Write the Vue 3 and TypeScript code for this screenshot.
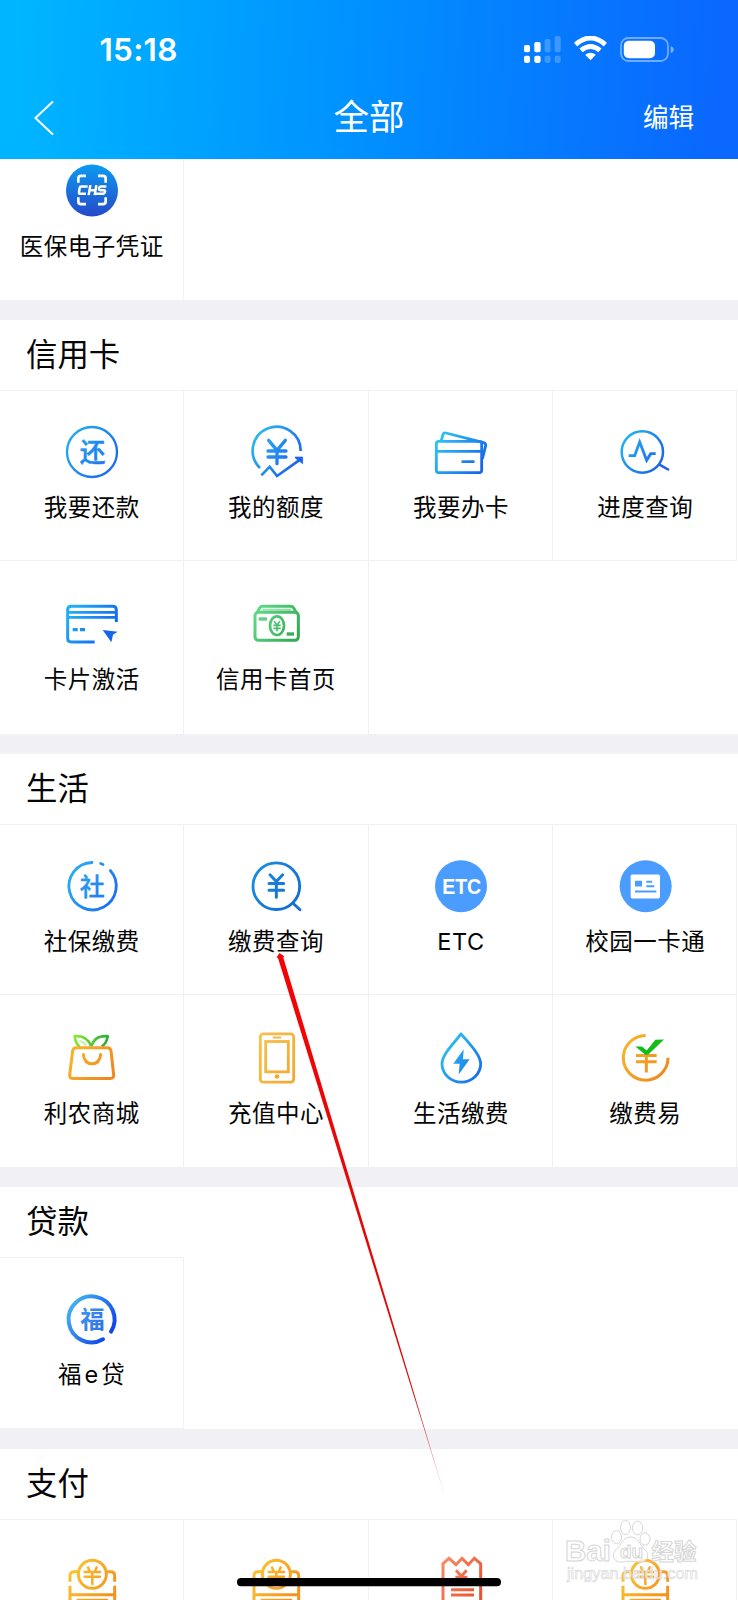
<script setup lang="ts">
interface Icon {
  x: number
  y: number
  from: string
  to: string
  body: string
}
interface Item {
  label: string
  icon: string
}
interface Section {
  title?: string
  rows: { kind: string; items: Item[] }[]
}

const CJK = "font-family=\"'Noto Sans CJK SC', sans-serif\" text-anchor=\"middle\""
const LATIN = "font-family=\"'Liberation Sans', Arial, sans-serif\" text-anchor=\"middle\""

// Every icon uses a 180-unit square; x and y are the origin of that square.
const icons: Record<string, Icon> = {
  chs: {
    x: 186, y: 482.5, from: '#0e8fee', to: '#2151cf',
    body: `<linearGradient id="chsBg" x1="0" y1="0" x2="0" y2="1"><stop offset="0" stop-color="#0c9bf2"/><stop offset="1" stop-color="#2549c8"/></linearGradient>
      <circle cx="276" cy="571" r="78" fill="url(#chsBg)"/>
      <path d="M235 548v-13q0-8 8-8h15M294 527h15q8 0 8 8v13M317 591v13q0 8-8 8h-15M258 612h-15q-8 0-8-8v-13" fill="none" stroke="#fff" stroke-width="8"/>
      <g fill="none" stroke="#fff" stroke-width="7.5"><path d="M263 559h-19q-4 0-5 4l-2 13q-1 5 4 5h17M271 555l-5 30M289 555l-5 30M268 570h19"/><path d="M319 559h-17q-4 0-5 5t4 6h11q4 0 3 5t-5 6h-22"/></g>`,
  },
  repay: {
    x: 186, y: 66, from: '#20a8ee', to: '#1f6cf0',
    body: `<circle cx="276" cy="156" r="75" fill="none" stroke="url(#G)" stroke-width="7"/>
      <text x="278" y="185" ${CJK} font-size="77" font-weight="500" fill="url(#G)" stroke="url(#G)" stroke-width="1.5">还</text>`,
  },
  quota: {
    x: 739, y: 66, from: '#2bb4ee', to: '#1b63ef',
    body: `<g fill="none" stroke="url(#G)" stroke-width="8">
      <path d="M781 204A72 72 0 1 1 903 153"/><path d="M785 226l25-26 22 28 66-47"/>
      <path d="M807 121l25 30 25-30M832 150v41M805 153h54M805 171h54" stroke-width="10" stroke-linecap="round"/></g>
      <path d="M886 171h23v20l-21-16z" fill="#1b63ef" stroke="#1b63ef" stroke-width="2"/>`,
  },
  apply: {
    x: 183, y: 66, from: '#2cc0f2', to: '#1769ea',
    body: `<g fill="none" stroke="url(#G)" stroke-width="8.5" stroke-linejoin="round">
      <rect x="199" y="124" width="136" height="94" rx="7"/><path d="M199 154h136"/>
      <path d="M214 121l5-18q2-6 9-4l113 29q7 2 6 9l-10 40"/><path d="M278 185h32" stroke-linecap="round"/></g>`,
  },
  progress: {
    x: 736, y: 66, from: '#22aff0', to: '#1c5fe8',
    body: `<g fill="none" stroke="url(#G)" stroke-width="7.5"><circle cx="818" cy="156" r="62"/>
      <path d="M868 193l30 17"/><path d="M777 167h18l15-41 21 55 12-20h15" stroke-width="8.5"/></g>`,
  },
  activate: {
    x: 186, y: 42, from: '#20aef3', to: '#1460ee',
    body: `<g fill="none" stroke="url(#G)" stroke-width="9"><path d="M284 186h-70q-11 0-11-11V90q0-11 11-11h124q11 0 11 11v36"/>
      <path d="M204 97h145M204 112h145" stroke-width="8"/><path d="M218 149h15M240 149h15" stroke-width="10"/></g>
      <path d="M308 150l45 5-14 9-5 23z" fill="#1464ee"/>`,
  },
  cash: {
    x: 739, y: 42, from: '#5fd888', to: '#33a952',
    body: `<g fill="none" stroke="url(#G)" stroke-width="9"><path d="M772 98l8-14q3-5 9-5h84q6 0 9 5l8 14"/>
      <path d="M788 89h86" stroke-width="6" opacity=".6"/>
      <rect x="766" y="97" width="130" height="84" rx="10"/><ellipse cx="832" cy="137" rx="21" ry="28" fill="#fff" stroke-width="8"/>
      <path d="M823 124l9 11 9-11M832 134v20M821 136h22M821 145h22" stroke-width="5"/></g>
      <path d="M777 112h25v10h-25z" fill="#65cd83"/><path d="M861 157h22v10h-22z" fill="#3cac5a"/>`,
  },
  social: {
    x: 186, y: 46.5, from: '#2aabef', to: '#1d72f2',
    body: `<g fill="none" stroke="url(#G)" stroke-width="8.5" stroke-linecap="round">
      <path d="M276 66A71 71 0 1 0 331 90"/><path d="M302 69l7 3"/></g>
      <text x="277" y="167" ${CJK} font-size="75" font-weight="500" fill="url(#G)" stroke="url(#G)" stroke-width="1">社</text>`,
  },
  feeQuery: {
    x: 739, y: 46.5, from: '#1b8ae0', to: '#126ed2',
    body: `<g fill="none" stroke="url(#G)" stroke-width="8.5" stroke-linecap="round"><circle cx="830" cy="137" r="70"/>
      <path d="M880 188l21 20"/><path d="M811 103l19 20 19-20M830 124v46M808 129h44M808 149h44" stroke-width="9"/></g>`,
  },
  etc: {
    x: 183, y: 46.5, from: '#4a9dff', to: '#4a9dff',
    body: `<circle cx="273" cy="137" r="78" fill="#4a9dff"/>
      <text x="275" y="161" ${LATIN} font-size="66" font-weight="700" fill="#fff" textLength="117" lengthAdjust="spacingAndGlyphs">ETC</text>`,
  },
  campus: {
    x: 736, y: 46.5, from: '#4a9dff', to: '#4a9dff',
    body: `<circle cx="828" cy="137" r="78" fill="#4a9dff"/><rect x="783" y="102" width="88" height="72" rx="5" fill="#fff"/>
      <path d="M796 121h21v17h-21zM830 121h17v6h-17zM830 134h24v6h-24zM796 150h64v6h-64z" fill="#4a9dff"/>`,
  },
  farm: {
    x: 186, y: 52.5, from: '#f7b82b', to: '#f18720',
    body: `<linearGradient id="leaf" x1="220" y1="80" x2="326" y2="100" gradientUnits="userSpaceOnUse"><stop offset="0" stop-color="#8dec35"/><stop offset="1" stop-color="#28a838"/></linearGradient>
      <g fill="none" stroke="url(#leaf)" stroke-width="8" stroke-linejoin="round"><path d="M239 108q-13-9-15-31 38-3 49 30"/><path d="M274 108q9-34 49-31-3 22-18 31"/><path d="M238 91q15 4 20 15" stroke-width="6" opacity=".4"/></g>
      <path d="M228 112h94q9 0 11 9l8 72q1 11-10 11H220q-12 0-11-11l9-72q2-9 10-9zM250 132q3 27 26 28 23-1 26-28" fill="none" stroke="url(#G)" stroke-width="9" stroke-linecap="round"/>`,
  },
  recharge: {
    x: 739, y: 52.5, from: '#f7c04c', to: '#f1aa31',
    body: `<g fill="none" stroke="url(#G)" stroke-width="8.5"><rect x="782" y="70" width="100" height="145" rx="9"/><rect x="798" y="93" width="68" height="91"/>
      <path d="M819 81h25" stroke-width="6"/></g><circle cx="832" cy="198" r="7" fill="#f2a832"/>`,
  },
  utility: {
    x: 183, y: 52.5, from: '#32c4ed', to: '#1570ef',
    body: `<path d="M273 70C253 97 216 132 216 160a58 55 0 0 0 116 0C332 132 295 97 273 70z" fill="none" stroke="url(#G)" stroke-width="8.5" stroke-linejoin="round"/>
      <path d="M281 116l-31 44h19l-3 32 33-46h-20z" fill="url(#G)"/>`,
  },
  easyPay: {
    x: 736, y: 52.5, from: '#f4b42b', to: '#f18b1d',
    body: `<g fill="none" stroke="url(#G)" stroke-width="9"><path d="M828 75A67 67 0 1 0 895 142"/>
      <path d="M830 130v56M799 135h62M799 154h62"/></g>
      <path d="M797 108h20l14 12 26-32 26-1-48 46h-8z" fill="#13bd18"/>`,
  },
  fortune: {
    x: 186, y: 328, from: '#40aef0', to: '#0f43ea',
    body: `<path d="M333 456A69 69 0 1 0 309 479" fill="none" stroke="url(#G)" stroke-width="12" stroke-linecap="round"/>
      <linearGradient id="fu" x1="0" y1="0" x2="1" y2="1"><stop offset="0" stop-color="#3f9cf0"/><stop offset="1" stop-color="#2d6de8"/></linearGradient>
      <text x="277" y="446" ${CJK} font-size="73" font-weight="700" fill="url(#fu)">福</text>`,
  },
  coin: {
    x: 186, y: 363, from: '#fbc234', to: '#f3921c',
    body: `<g fill="none" stroke="url(#G)" stroke-width="9"><circle cx="277" cy="433" r="42"/>
      <path d="M210 455v-18q0-12 12-12h12M320 425h12q12 0 12 12v18M210 467v55h134v-55M210 494h134M230 511h94"/>
      <path d="M264 412l5 12M290 412l-5 12M254 426h46M254 440h46M277 426v36" stroke-linecap="round" stroke-width="7.5"/></g>`,
  },
  bill: {
    x: 183, y: 363, from: '#f58a62', to: '#e9502f',
    body: `<g fill="none" stroke="url(#G)" stroke-width="9"><path d="M219 530V401l18-16 21 19 18-19 19 19 18-19 19 16v129"/>
      <path d="M258 421l16 18 16-18M274 440v20M256 442h36"/><path d="M243 479h69M243 495h69"/></g>`,
  },
}

const sections: Section[] = [
  { rows: [{ kind: 'partial', items: [{ label: '医保电子凭证', icon: 'chs' }] }] },
  {
    title: '信用卡',
    rows: [
      {
        kind: 'first',
        items: [
          { label: '我要还款', icon: 'repay' },
          { label: '我的额度', icon: 'quota' },
          { label: '我要办卡', icon: 'apply' },
          { label: '进度查询', icon: 'progress' },
        ],
      },
      {
        kind: 'second tall',
        items: [
          { label: '卡片激活', icon: 'activate' },
          { label: '信用卡首页', icon: 'cash' },
        ],
      },
    ],
  },
  {
    title: '生活',
    rows: [
      {
        kind: 'first',
        items: [
          { label: '社保缴费', icon: 'social' },
          { label: '缴费查询', icon: 'feeQuery' },
          { label: 'ETC', icon: 'etc' },
          { label: '校园一卡通', icon: 'campus' },
        ],
      },
      {
        kind: 'second',
        items: [
          { label: '利农商城', icon: 'farm' },
          { label: '充值中心', icon: 'recharge' },
          { label: '生活缴费', icon: 'utility' },
          { label: '缴费易', icon: 'easyPay' },
        ],
      },
    ],
  },
  { title: '贷款', rows: [{ kind: 'first single', items: [{ label: '福 e 贷', icon: 'fortune' }] }] },
  {
    title: '支付',
    rows: [
      {
        kind: 'first',
        items: [
          { label: '', icon: 'coin' },
          { label: '', icon: 'coin' },
          { label: '', icon: 'bill' },
          { label: '', icon: 'coin' },
        ],
      },
    ],
  },
]

function viewBox(name: string): string {
  const i = icons[name]
  return `${i.x} ${i.y} 180 180`
}

function artwork(name: string): string {
  const i = icons[name]
  const id = `grad-${name}`
  const gradient = `<linearGradient id="${id}" gradientUnits="userSpaceOnUse" x1="${i.x + 30}" y1="${i.y + 50}" x2="${i.x + 150}" y2="${i.y + 130}"><stop offset="0" stop-color="${i.from}"/><stop offset="1" stop-color="${i.to}"/></linearGradient>`
  return gradient + i.body.split('url(#G)').join(`url(#${id})`)
}
</script>

<template>
  <div class="screen">
    <header class="header">
      <div class="status">
        <span class="time">15:18</span>
        <div class="indicators">
          <svg class="signal" viewBox="0 0 37 27">
            <g fill="#fff">
              <rect x="0" y="9" width="6" height="7.3" rx="1.8" />
              <rect x="10.3" y="6" width="6.3" height="10.3" rx="1.8" />
              <rect x="0" y="19.7" width="6" height="7.2" rx="1.8" />
              <rect x="10.3" y="19.7" width="6.3" height="7.2" rx="1.8" />
            </g>
            <g fill="#fff" opacity=".22">
              <rect x="20.6" y="3" width="6" height="13.3" rx="1.8" />
              <rect x="30.7" y="0" width="6" height="16.3" rx="1.8" />
              <rect x="20.6" y="19.7" width="6" height="7.2" rx="1.8" />
              <rect x="30.7" y="19.7" width="6" height="7.2" rx="1.8" />
            </g>
          </svg>
          <svg class="wifi" viewBox="0 0 33 25">
            <path d="M1.6 8.6Q16.5-4.6 31.4 8.6M7 14.4q9.5-8 19 0" fill="none" stroke="#fff" stroke-width="4.8" />
            <path d="M11.2 18.8q5.3-4.2 10.6 0l-5.3 5.4z" fill="#fff" />
          </svg>
          <svg class="battery" viewBox="0 0 54 25">
            <rect x="1" y="1" width="47" height="23" rx="7.5" fill="none" stroke="#fff" stroke-width="1.8" opacity=".42" />
            <rect x="3.8" y="3.7" width="31.2" height="17.6" rx="5" fill="#fff" />
            <path d="M50.6 9.3q3.2 1 3.2 3.4t-3.2 3.4z" fill="#fff" opacity=".45" />
          </svg>
        </div>
      </div>
      <div class="nav">
        <svg class="back" viewBox="0 0 20 34"><path d="M18.4 1L1.4 17l17 16" fill="none" stroke="#fff" stroke-width="2" stroke-linecap="round" stroke-linejoin="round" /></svg>
        <h1 class="page-title">全部</h1>
        <span class="edit">编辑</span>
      </div>
    </header>

    <main>
      <section v-for="(section, s) in sections" :key="s" class="section">
        <h2 v-if="section.title" class="section-title">{{ section.title }}</h2>
        <div v-for="(row, r) in section.rows" :key="r" class="row" :class="row.kind">
          <div v-for="(item, c) in row.items" :key="c" class="cell">
            <svg class="icon" :viewBox="viewBox(item.icon)"><g v-html="artwork(item.icon)"></g></svg>
            <span class="label">{{ item.label }}</span>
          </div>
        </div>
      </section>
    </main>

    <svg class="overlay" viewBox="0 0 738 1600">
      <defs>
        <linearGradient id="pointer" x1="0" y1="955" x2="0" y2="1500" gradientUnits="userSpaceOnUse">
          <stop offset="0" stop-color="#f40404" />
          <stop offset=".8" stop-color="#dc0a0a" />
          <stop offset="1" stop-color="#d01818" stop-opacity=".4" />
        </linearGradient>
      </defs>
      <path d="M276.5 957.5l3-4.5 5 3.5-1.3.8L446.4 1501 278 958z" fill="url(#pointer)" />
      <rect x="237" y="1578" width="264" height="8.3" rx="4.1" fill="#000" />
      <g fill="#fff" fill-opacity=".72" stroke="#d6d6d6" stroke-width="1">
        <ellipse cx="616.5" cy="1537" rx="5" ry="6.5" />
        <ellipse cx="625.5" cy="1527.5" rx="5" ry="7" />
        <ellipse cx="637.5" cy="1528" rx="5.2" ry="6.8" />
        <ellipse cx="645" cy="1539" rx="5" ry="6.2" />
        <path d="M630.5 1537c-8 0-9 8-14 12-6 6-3 14 6 13 5-1 11-1 16 0 9 1 12-7 6-13-5-4-6-12-14-12z" />
        <text class="mark latin" x="565" y="1561" textLength="46" lengthAdjust="spacingAndGlyphs">Bai</text>
        <text class="mark du" x="620" y="1558">du</text>
        <text class="mark hanzi" x="651.5" y="1560">经验</text>
        <text class="mark url" x="567" y="1579" textLength="131" lengthAdjust="spacingAndGlyphs">jingyan.baidu.com</text>
      </g>
    </svg>
  </div>
</template>

<style>
body {
  margin: 0;
  overflow: hidden;
}
</style>

<style scoped>
.screen {
  position: relative;
  width: 738px;
  height: 1600px;
  overflow: hidden;
  background: #f0f0f5;
  color: #050505;
  font-family: Inter, 'Noto Sans CJK SC', sans-serif;
}
.header {
  height: 159px;
  box-sizing: border-box;
  padding-top: 30px;
  background: linear-gradient(93deg, #00b5ff 3%, #0094ff 45%, #0a67ff 97%);
  color: #fff;
}
.status {
  display: flex;
  justify-content: space-between;
  align-items: center;
  height: 40px;
  padding: 0 64px 0 99.5px;
}
.time {
  font-size: 31.5px;
  line-height: 38px;
  margin-bottom: 1px;
  font-weight: 600;
  letter-spacing: 0.3px;
}
.indicators {
  display: flex;
  align-items: flex-end;
  margin-top: -2px;
}
.signal {
  width: 37px;
  height: 27px;
  margin-right: 13.3px;
}
.wifi {
  width: 33px;
  height: 25px;
  margin-right: 12.7px;
  margin-bottom: 1.5px;
}
.battery {
  width: 54px;
  height: 25px;
  margin-bottom: 1px;
}
.nav {
  display: grid;
  grid-template-columns: 100px 1fr 100px;
  align-items: center;
  height: 60px;
  margin-top: 18px;
}
.back {
  width: 20px;
  height: 34px;
  margin-left: 33.5px;
}
.page-title {
  margin: 0;
  font-size: 35.5px;
  line-height: 60px;
  font-weight: 400;
  text-align: center;
}
.edit {
  font-size: 25.6px;
  line-height: 60px;
  padding-left: 5px;
}
.section {
  margin-bottom: 20px;
  background: #fff;
}
.section-title {
  margin: 0;
  height: 70px;
  padding-left: 26px;
  font-size: 31.4px;
  line-height: 71px;
  font-weight: 400;
}
.row {
  display: grid;
  grid-template-columns: repeat(4, 184.3px);
}
.cell {
  display: flex;
  flex-direction: column;
  align-items: center;
  box-sizing: border-box;
  border-right: 1px solid #f1f1f3;
}
.cell:nth-child(n + 3) {
  padding-left: 1.5px;
}
.partial .cell {
  height: 141px;
  padding-top: 2px;
}
.first .cell {
  height: 171px;
  padding-top: 31px;
  border-top: 1px solid #f1f1f3;
  border-bottom: 1px solid #f1f1f3;
}
.second .cell {
  height: 172px;
  padding-top: 33px;
}
.tall .cell {
  height: 173px;
}
.single .cell {
  height: 172px;
}
.icon {
  width: 60px;
  height: 60px;
  flex: none;
}
.label {
  margin-top: 11px;
  font-size: 23.5px;
  line-height: 30px;
  letter-spacing: 0.5px;
  white-space: nowrap;
}
.single .label {
  word-spacing: -4.5px;
}
.overlay {
  position: absolute;
  inset: 0;
  width: 738px;
  height: 1600px;
  pointer-events: none;
}
.mark {
  font-family: 'Liberation Sans', 'Noto Sans CJK SC', sans-serif;
  font-weight: 700;
}
.latin {
  font-size: 29px;
}
.du {
  font-size: 19px;
}
.hanzi {
  font-family: 'Noto Sans CJK SC', sans-serif;
  font-size: 22.5px;
}
.url {
  font-size: 16px;
  font-weight: 400;
  stroke-width: 0.6px;
}
</style>
